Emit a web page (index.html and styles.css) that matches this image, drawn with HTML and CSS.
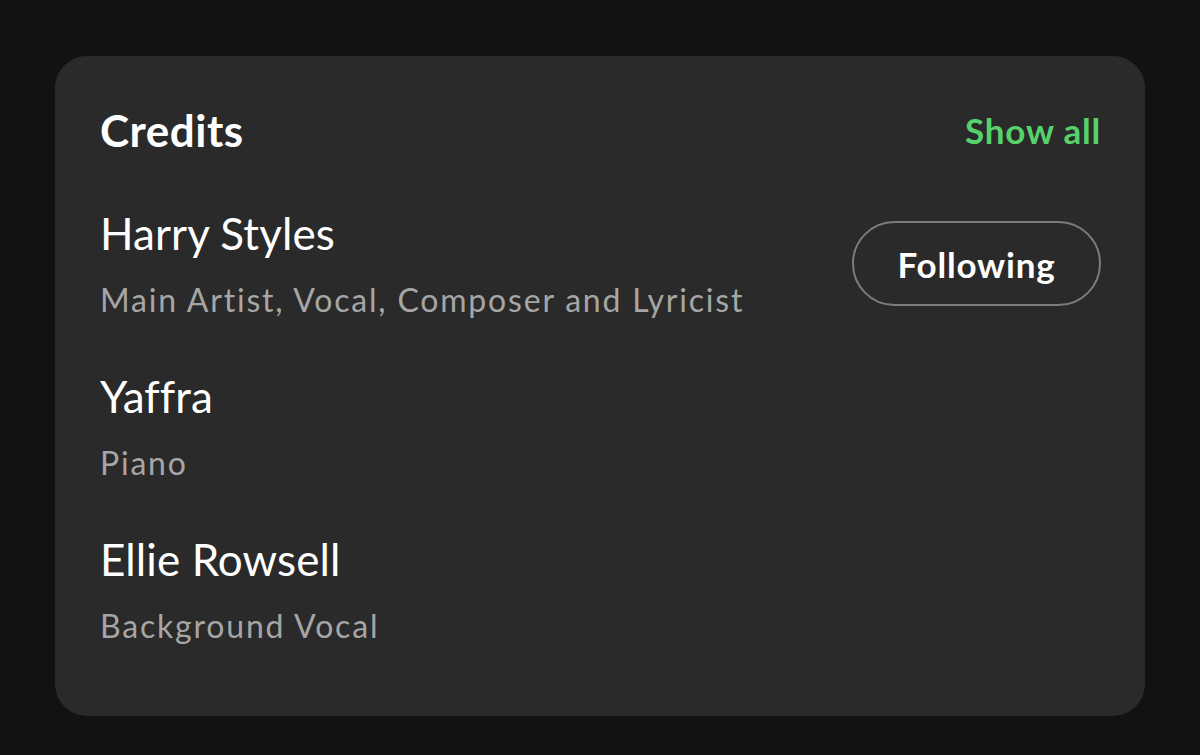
FILE: index.html
```html
<!DOCTYPE html>
<html lang="en">
<head>
<meta charset="utf-8">
<title>Credits</title>
<link rel="stylesheet" href="styles.css">
</head>
<body>
  <section class="card">
    <header class="card-header">
      <h2 class="title">Credits</h2>
      <a class="show-all" href="#">Show all</a>
    </header>
    <ul class="credits">
      <li class="credit">
        <div class="credit-info">
          <div class="name">Harry Styles</div>
          <div class="roles">Main Artist, Vocal, Composer and Lyricist</div>
        </div>
        <button class="follow-btn" type="button">Following</button>
      </li>
      <li class="credit">
        <div class="credit-info">
          <div class="name">Yaffra</div>
          <div class="roles">Piano</div>
        </div>
      </li>
      <li class="credit">
        <div class="credit-info">
          <div class="name">Ellie Rowsell</div>
          <div class="roles">Background Vocal</div>
        </div>
      </li>
    </ul>
  </section>
</body>
</html>
```
FILE: styles.css
```css
* { box-sizing: border-box; }

html, body {
  margin: 0;
  padding: 0;
  background: #121212;
}

body {
  font-family: "Lato", "Noto Sans", sans-serif;
  color: #ffffff;
  padding: 56px 55px 0 55px;
}

.card {
  background: #2a2a2a;
  border-radius: 32px;
  padding: 48px 44px 70px 45px;
}

.card-header {
  display: flex;
  align-items: center;
  justify-content: space-between;
  height: 52px;
}

.title {
  margin: 0;
  font-size: 44px;
  line-height: 52px;
  font-weight: 700;
  letter-spacing: 0.5px;
}

.show-all {
  color: #57d26a;
  text-decoration: none;
  font-size: 35px;
  font-weight: 700;
  line-height: 44px;
  letter-spacing: 0.8px;
}

.credits {
  list-style: none;
  margin: 51px 0 0 0;
  padding: 0;
  display: flex;
  flex-direction: column;
  gap: 50px;
}

.credit {
  display: flex;
  align-items: center;
  justify-content: space-between;
}

.credit-info {
  display: flex;
  flex-direction: column;
}

.name {
  font-size: 44px;
  line-height: 52px;
  font-weight: 400;
  letter-spacing: 0.1px;
}

.roles {
  margin-top: 21px;
  font-size: 32px;
  line-height: 40px;
  color: #a6a6a6;
  letter-spacing: 1.8px;
}

.follow-btn {
  font-family: inherit;
  background: transparent;
  color: #ffffff;
  border: 2px solid #7c7c7c;
  border-radius: 43px;
  height: 85px;
  width: 249px;
  font-size: 35px;
  font-weight: 700;
  letter-spacing: 0.8px;
  padding: 0;
  cursor: pointer;
}
```
